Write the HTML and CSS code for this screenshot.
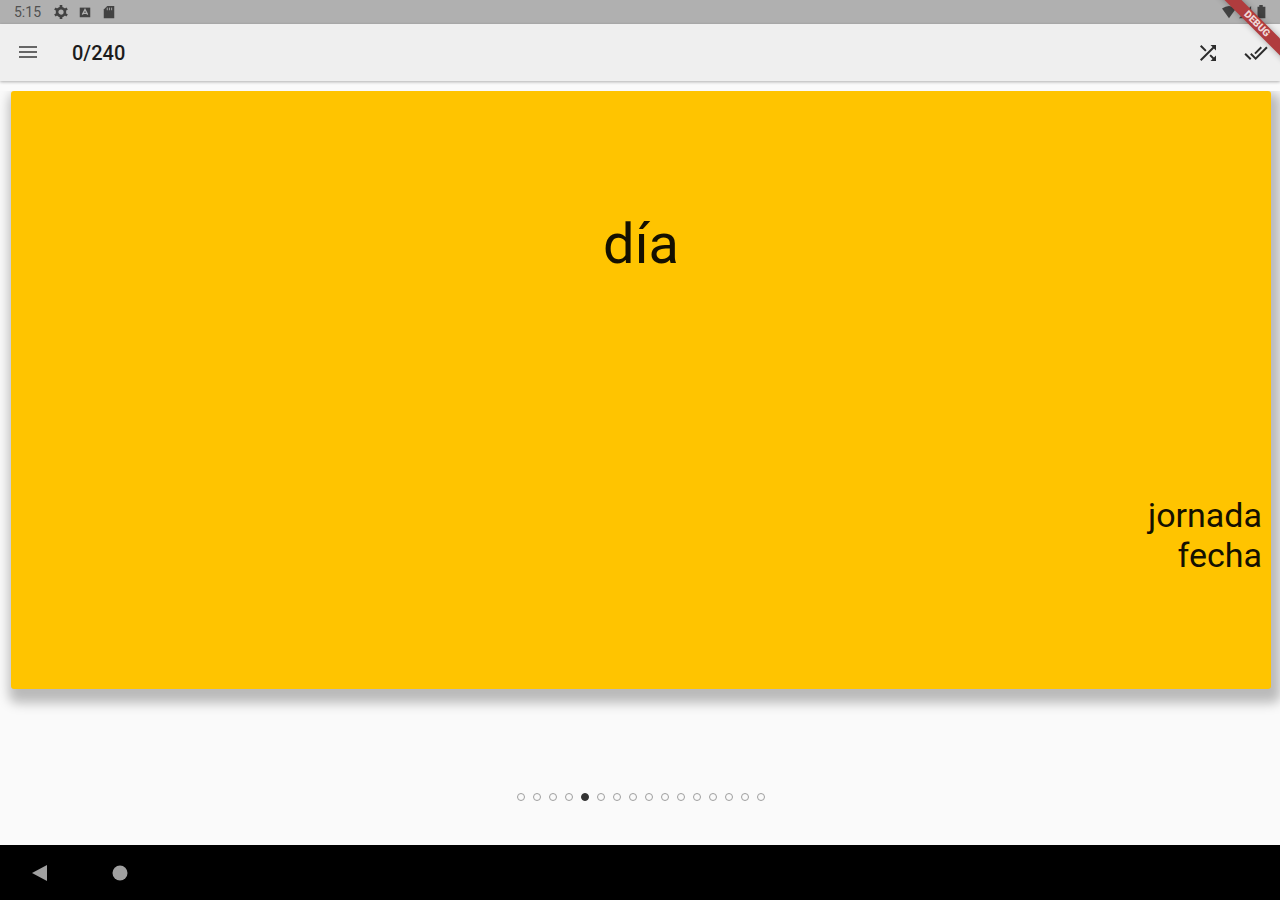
FILE: index.html
```html
<!DOCTYPE html>
<html lang="es">
<head>
    <meta charset="UTF-8">
    <meta name="viewport" content="width=device-width, initial-scale=1.0">
    <title>Flashcards</title>
    <link rel="stylesheet" href="styles.css">
</head>
<body>
    <div class="status-bar">
        <span class="clock">5:15</span>
        <svg class="status-icon" viewBox="0 0 16 16">
            <circle cx="8" cy="8" r="4.5" fill="none" stroke="#424242" stroke-width="3"/>
            <path d="M8 0v3M8 13v3M1 4l3 2M12 10l3 2M1 12l3-2M12 6l3-2" stroke="#424242" stroke-width="3"/>
        </svg>
        <svg class="status-icon" viewBox="0 0 16 16">
            <path d="M2 3h12v11H2z" fill="#424242"/>
            <path d="M5 11l3-6 3 6M6 9.500h4" fill="none" stroke="#b0b0b0" stroke-width="1.500"/>
        </svg>
        <svg class="status-icon" viewBox="0 0 16 16">
            <path d="M6 1h8v14H2V5z" fill="#424242"/>
            <path d="M6 3v3M8.500 3v3M11 3v3" stroke="#b0b0b0" stroke-width="1"/>
        </svg>
        <div class="status-right">
            <svg class="status-icon" viewBox="0 0 16 16"><path d="M0 4q8-6 16 0L8 15z" fill="#424242"/></svg>
            <svg class="status-icon" viewBox="0 0 16 16"><path d="M15 1v14H1z" fill="#424242"/></svg>
            <svg class="status-icon" viewBox="0 0 16 16"><path d="M6 0h4v2h3v13H4V2h2z" fill="#424242"/></svg>
        </div>
    </div>

    <header class="app-bar">
        <button type="button" class="icon-button menu" aria-label="Menu">
            <svg viewBox="0 0 24 24"><path d="M3 5h18v2H3zM3 10h18v2H3zM3 15h18v2H3z"/></svg>
        </button>
        <h1>0/240</h1>
        <div class="actions">
            <button type="button" class="icon-button" aria-label="Shuffle">
                <svg viewBox="0 0 24 24"><path d="M10.590 9.170L5.410 4 4 5.410l5.170 5.170 1.420-1.410zM14.500 4l2.040 2.040L4 18.590 5.410 20 17.960 7.460 20 9.500V4h-5.500zm.330 9.410l-1.410 1.410 3.130 3.130L14.500 20H20v-5.500l-2.040 2.040-3.130-3.130z"/></svg>
            </button>
            <button type="button" class="icon-button" aria-label="Mark all as known">
                <svg viewBox="0 0 24 24"><path d="M18 7l-1.410-1.410-6.340 6.340 1.410 1.410L18 7zm4.240-1.410L11.660 16.170 7.480 12l-1.410 1.410L11.660 19l12-12-1.420-1.410zM.410 13.410L6 19l1.410-1.410L1.830 12 .410 13.410z"/></svg>
            </button>
        </div>
    </header>

    <main>
        <article class="card">
            <h2 class="word">día</h2>
            <p class="synonyms">jornada<br>fecha</p>
        </article>
        <div class="dots">
            <span class="dot"></span>
            <span class="dot"></span>
            <span class="dot"></span>
            <span class="dot"></span>
            <span class="dot active"></span>
            <span class="dot"></span>
            <span class="dot"></span>
            <span class="dot"></span>
            <span class="dot"></span>
            <span class="dot"></span>
            <span class="dot"></span>
            <span class="dot"></span>
            <span class="dot"></span>
            <span class="dot"></span>
            <span class="dot"></span>
            <span class="dot"></span>
        </div>
    </main>

    <nav class="nav-bar">
        <button type="button" class="nav-button" aria-label="Back">
            <svg viewBox="0 0 16 16"><path d="M0 8l15-8v16z"/></svg>
        </button>
        <button type="button" class="nav-button" aria-label="Home">
            <svg viewBox="0 0 16 16"><circle cx="8" cy="8" r="7.500"/></svg>
        </button>
    </nav>

    <div class="ribbon"><span>DEBUG</span></div>
</body>
</html>
```
FILE: styles.css
```css
* {
    box-sizing: border-box;
}

body {
    font-family: Roboto, sans-serif;
    background-color: #fafafa;
    color: #1c1c1c;
    margin: 0;
    display: flex;
    flex-direction: column;
    min-height: 100vh;
    position: relative;
    overflow: hidden;
}

h1,
h2,
p {
    margin: 0;
    font-weight: 400;
}

button {
    border: none;
    padding: 0;
    background: none;
    cursor: pointer;
}

.status-bar {
    height: 24px;
    padding: 0 12px 0 14px;
    display: flex;
    align-items: center;
    gap: 10px;
    background-color: #b0b0b0;
    color: #505050;
}

.clock {
    width: 30px;
    font-size: 14px;
}

.status-icon {
    width: 14px;
    height: 14px;
}

.status-right {
    margin-left: auto;
    display: flex;
    gap: 2px;
}

.app-bar {
    height: 57px;
    padding: 0 12px 0 16px;
    display: flex;
    align-items: center;
    background-color: #efefef;
    box-shadow: 0 1px 3px rgba(0, 0, 0, 0.3);
}

.app-bar h1 {
    margin-left: 32px;
    font-size: 20px;
    font-weight: 500;
}

.icon-button {
    width: 24px;
    height: 24px;
}

.icon-button svg {
    display: block;
    fill: #2c2c2c;
}

.menu svg {
    fill: #666666;
}

.actions {
    margin-left: auto;
    display: flex;
    gap: 24px;
}

main {
    flex: 1;
    padding: 10px 9px 0 11px;
    display: flex;
    flex-direction: column;
}

.card {
    flex: 1;
    padding: 0 9px;
    display: flex;
    flex-direction: column;
    background-color: #ffc400;
    color: #141000;
    border-radius: 3px;
    box-shadow: 4px 8px 12px 6px rgba(0, 0, 0, 0.26);
    clip-path: inset(0 -20px -40px -20px);
}

.word {
    margin-top: 120px;
    font-size: 56px;
    line-height: 66px;
    text-align: center;
}

.synonyms {
    margin-top: auto;
    margin-bottom: 114px;
    font-size: 34px;
    line-height: 40px;
    text-align: right;
}

.dots {
    height: 156px;
    padding-top: 60px;
    display: flex;
    align-items: center;
    justify-content: center;
    gap: 8px;
}

.dot {
    width: 8px;
    height: 8px;
    border: 1px solid #9e9e9e;
    border-radius: 50%;
}

.active {
    border-color: #333333;
    background-color: #333333;
}

.nav-bar {
    height: 55px;
    padding-left: 16px;
    display: flex;
    align-items: center;
    gap: 32px;
    background-color: #000000;
}

.nav-button {
    width: 48px;
    height: 48px;
    display: flex;
    align-items: center;
    justify-content: center;
}

.nav-button svg {
    width: 16px;
    height: 16px;
    fill: #a0a0a0;
}

/* corner ribbon, lies over the bars */
.ribbon {
    position: absolute;
    top: 18px;
    right: -25px;
    width: 96px;
    height: 12px;
    background-color: #b03c3e;
    color: #f0d8d8;
    font-size: 10px;
    font-weight: 900;
    line-height: 12px;
    text-align: center;
    transform: rotate(45deg);
    box-shadow: 0 0 6px rgba(0, 0, 0, 0.3);
}
```
